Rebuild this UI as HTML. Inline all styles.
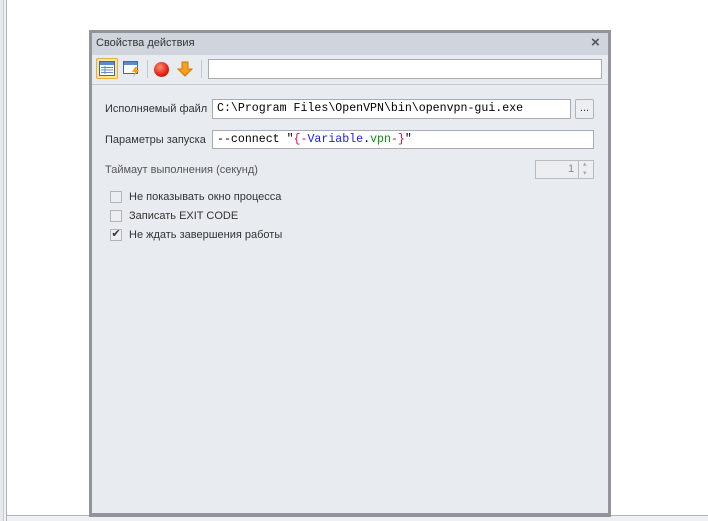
<!DOCTYPE html>
<html><head><meta charset="utf-8"><style>
*{box-sizing:border-box;margin:0;padding:0}
body{width:708px;height:521px;background:#fff;position:relative;overflow:hidden;font-family:"Liberation Sans",sans-serif;font-size:12px;color:#333}
.a{position:absolute}
.mono{font-family:"Liberation Mono",monospace;font-size:11.6px;color:#000}
.inp{position:absolute;background:#fff;border:1px solid #a9abb0;padding:2px 4px;line-height:14px;white-space:nowrap}
.cb{position:absolute;left:110px;width:12px;height:12px;border:1px solid #b0b3b8;background:#eceef1}
.lbl{position:absolute;left:129px;font-size:11px;color:#333}
</style></head><body>
<div class="a" style="left:0;top:0;width:3px;height:521px;background:#e6e8eb"></div>
<div class="a" style="left:3px;top:0;width:4px;height:521px;background:#eef0f4;border-left:1px solid #c9ccd2;border-right:1px solid #aeb2b9"></div>
<div class="a" style="left:7px;top:515px;width:701px;height:6px;background:#eef0f3;border-top:1px solid #aeb2b9"></div>
<div class="a" style="left:89px;top:30px;width:522px;height:487px;background:#939499"></div>
<div class="a" style="left:92px;top:33px;width:516px;height:480px;background:#e8ebf0"></div>
<div class="a" style="left:92px;top:33px;width:516px;height:22px;background:#d0d5dd"></div>
<div class="a" style="left:96px;top:37px;font-size:11px;color:#333">Свойства действия</div>
<div class="a" style="left:591px;top:34px;font-size:15px;font-weight:bold;color:#555">×</div>
<div class="a" style="left:92px;top:84px;width:516px;height:1px;background:#c4c8ce"></div>
<div class="a" style="left:96px;top:58px;width:22px;height:21px;background:#fbe49a;border:1px solid #e0b040;border-radius:2px"></div>
<svg class="a" style="left:99px;top:61px" width="16" height="15"><rect x="0.5" y="0.5" width="15" height="14" fill="#fff" stroke="#3a6aa8"/><rect x="1" y="1" width="14" height="3" fill="#5a8ac8"/><g stroke="#6b8bb5"><line x1="2" y1="6.5" x2="14" y2="6.5"/><line x1="2" y1="9" x2="14" y2="9"/><line x1="2" y1="11.5" x2="14" y2="11.5"/><line x1="6" y1="5" x2="6" y2="13"/></g></svg>
<svg class="a" style="left:123px;top:60px" width="18" height="18"><rect x="0.5" y="1.5" width="14" height="12" fill="#fff" stroke="#3a6aa8"/><rect x="1" y="2" width="13" height="3" fill="#5a8ac8"/><path d="M12 7 L9 12 L12 12 L10 17 L16 10 L13 10 L15 7Z" fill="#f2a020"/></svg>
<div class="a" style="left:147px;top:60px;width:1px;height:18px;background:#c4c8ce"></div>
<div class="a" style="left:154px;top:62px;width:15px;height:15px;border-radius:50%;background:radial-gradient(circle at 40% 35%,#ff8a70,#e02010 60%,#b01000)"></div>
<svg class="a" style="left:177px;top:61px" width="16" height="16"><path d="M5 1 H11 V8 H15 L8 15 L1 8 H5Z" fill="#f5a020" stroke="#d07800"/></svg>
<div class="a" style="left:201px;top:60px;width:1px;height:18px;background:#c4c8ce"></div>
<div class="a" style="left:208px;top:59px;width:394px;height:20px;background:#fff;border:1px solid #a9abb0"></div>
<div class="a" style="left:105px;top:103px;font-size:11px">Исполняемый файл</div>
<div class="inp mono" style="left:212px;top:99px;width:359px;height:20px">C:\Program Files\OpenVPN\bin\openvpn-gui.exe</div>
<div class="a" style="left:575px;top:99px;width:19px;height:20px;border:1px solid #b0b3b8;border-radius:2px;background:#eceef2;text-align:center;line-height:16px;font-size:11px">...</div>
<div class="a" style="left:105px;top:134px;font-size:11px">Параметры запуска</div>
<div class="inp mono" style="left:212px;top:130px;width:382px;height:19px;line-height:13px">--connect "<span style="color:#e01030">{-</span><span style="color:#2020e0">Variable</span>.<span style="color:#109010">vpn</span><span style="color:#e01030">-}</span>"</div>
<div class="a" style="left:105px;top:164px;font-size:11px;color:#555">Таймаут выполнения (секунд)</div>
<div class="a" style="left:535px;top:160px;width:59px;height:19px;border:1px solid #b8bbc0;background:#eceef1"></div>
<div class="a" style="left:578px;top:160px;width:1px;height:19px;background:#b8bbc0"></div>
<div class="a" style="left:568px;top:163px;font-size:11px;color:#888">1</div>
<div class="a" style="left:583px;top:160px;font-size:7px;color:#aaa;line-height:9px">▴<br>▾</div>
<div class="cb" style="top:191px"></div><div class="lbl" style="top:191px">Не показывать окно процесса</div>
<div class="cb" style="top:210px"></div><div class="lbl" style="top:210px">Записать EXIT CODE</div>
<div class="cb" style="top:229px"></div><div class="a" style="left:110px;top:227px;font-size:11px;color:#333;width:12px;text-align:center">✔</div><div class="lbl" style="top:229px">Не ждать завершения работы</div>
</body></html>
